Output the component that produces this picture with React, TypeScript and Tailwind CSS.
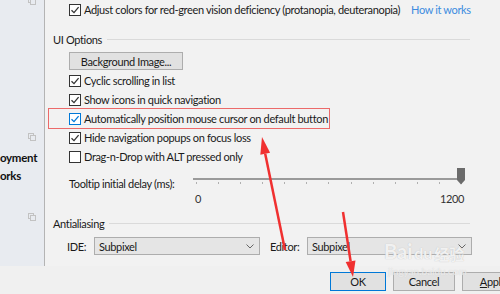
import type { ReactElement, ReactNode } from "react";

interface CheckRowProps {
  checked: boolean;
  focused?: boolean;
  children: ReactNode;
}

const CheckBox = ({ checked, focused }: { checked: boolean; focused?: boolean }): ReactElement => (
  <span
    className={`w-[12px] h-[12px] border bg-white flex items-center justify-center shrink-0 ${
      focused ? "border-[#0078d7]" : "border-[#333333]"
    }`}
  >
    {checked && (
      <svg width="10" height="10" viewBox="0 0 10 10" fill="none">
        <path
          d="M1.5 5.2 L4 7.6 L8.6 2.2"
          stroke={focused ? "#0078d7" : "#333333"}
          strokeWidth="1.3"
        />
      </svg>
    )}
  </span>
);

const CheckRow = ({ checked, focused, children }: CheckRowProps): ReactElement => (
  <div className="h-[19px] flex items-center gap-[3px] pl-[24px]">
    <CheckBox checked={checked} focused={focused} />
    <span className="whitespace-nowrap">{children}</span>
  </div>
);

const SectionHeader = ({ label }: { label: string }): ReactElement => (
  <div className="h-[20px] flex items-center gap-[5px] pl-[8px] pr-[30px]">
    <span className="whitespace-nowrap">{label}</span>
    <span className="flex-1 h-px bg-[#dadada]" />
  </div>
);

const Dropdown = ({ value, width }: { value: string; width: string }): ReactElement => (
  <div
    className={`${width} h-[18px] border border-[#adadad] bg-[#e5e5e5] flex items-center justify-between pl-[4px] pr-[5px]`}
  >
    <span className="whitespace-nowrap">{value}</span>
    <svg width="8" height="5" viewBox="0 0 8 5" fill="none">
      <path d="M0.5 0.5 L4 4 L7.5 0.5" stroke="#666" strokeWidth="1" />
    </svg>
  </div>
);

const PanelIcon = (): ReactElement => (
  <svg width="8" height="8" viewBox="0 0 8 8" fill="none">
    <rect x="0.5" y="0.5" width="5" height="5" stroke="#c2c2c2" />
    <rect x="2.5" y="2.5" width="5" height="5" fill="#e8ebf0" stroke="#c2c2c2" />
  </svg>
);

const ticks: number[] = Array.from({ length: 13 }, (_, i) => i);

const App = (): ReactElement => (
  <div className="w-[500px] h-[294px] overflow-hidden relative bg-[#f0f0f0] text-[11px] tracking-[-0.35px] text-[#1a1a1a] font-['Lato',sans-serif] leading-none">
    <div className="h-[266px] flex">
      <div className="w-[45px] shrink-0 bg-[#e8ebf0] border-r border-[#b4b4b4] flex flex-col">
        <div className="pl-[28px] -mt-[3px]">
          <PanelIcon />
        </div>
        <div className="pl-[28px] mt-[128px]">
          <PanelIcon />
        </div>
        <div className="mt-[8px] h-[18px] flex items-center font-bold text-[11.5px] tracking-[-0.3px] text-[#111] whitespace-nowrap">
          oyment
        </div>
        <div className="h-[18px] flex items-center font-bold text-[11.5px] tracking-[-0.3px] text-[#111] whitespace-nowrap">
          orks
        </div>
        <div className="pl-[28px] mt-[28px]">
          <PanelIcon />
        </div>
      </div>

      <div className="flex-1 bg-[#f2f2f2] flex flex-col">
        <div className="h-[19px] flex items-center gap-[3px] pl-[24px]">
          <CheckBox checked />
          <span className="whitespace-nowrap">
            Adjust colors for red-green vision deficiency (protanopia, deuteranopia)
          </span>
          <span className="ml-[8px] whitespace-nowrap text-[#3c8ce0]">How it works</span>
        </div>

        <div className="mt-[10px]">
          <SectionHeader label="UI Options" />
        </div>

        <div className="mt-[3px] pl-[24px]">
          <div className="w-[114px] h-[18px] border border-[#adadad] bg-[#e1e1e1] flex items-center justify-center whitespace-nowrap">
            Background Image...
          </div>
        </div>

        <div className="mt-[1px]">
          <CheckRow checked>Cyclic scrolling in list</CheckRow>
          <CheckRow checked>Show icons in quick navigation</CheckRow>
          <div className="-my-px ml-[3px] w-[282px] h-[21px] border border-[#ec6a6a] flex items-center gap-[3px] pl-[20px]">
            <CheckBox checked focused />
            <span className="whitespace-nowrap">
              Automatically position mouse cursor on default button
            </span>
          </div>
          <CheckRow checked>Hide navigation popups on focus loss</CheckRow>
          <CheckRow checked={false}>Drag-n-Drop with ALT pressed only</CheckRow>
        </div>

        <div className="h-[38px] flex">
          <div className="w-[148px] pl-[24px] pt-[12px] whitespace-nowrap">
            Tooltip initial delay (ms):
          </div>
          <div className="w-[272px] relative flex flex-col">
            <div className="mt-[12px] h-[2px] bg-[#9a9a9a]" />
            <div className="mt-[2px] h-[3px] flex justify-between pl-[3px] pr-[3px]">
              {ticks.map((t) => (
                <span key={t} className="w-px h-full bg-[#b0b0b0]" />
              ))}
            </div>
            <div className="mt-[9px] flex justify-between pl-[2px] pr-[1px] text-[#333]">
              <span>0</span>
              <span>1200</span>
            </div>
            <svg
              className="absolute top-[2px] left-[264px]"
              width="9"
              height="17"
              viewBox="0 0 9 17"
            >
              <path d="M0 0 H8 V12 L4 16.5 L0 12 Z" fill="#6b6b6b" />
            </svg>
          </div>
        </div>

        <div className="mt-[9px]">
          <SectionHeader label="Antialiasing" />
        </div>

        <div className="mt-[4px] flex items-center pl-[22px]">
          <span className="w-[27px]">IDE:</span>
          <Dropdown value="Subpixel" width="w-[166px]" />
          <span className="ml-[10px] w-[37px]">Editor:</span>
          <Dropdown value="Subpixel" width="w-[165px]" />
        </div>
      </div>
    </div>

    <div className="h-[28px] flex items-start pt-[6px] pl-[330px] gap-[7px]">
      <div className="w-[56px] h-[19px] shrink-0 border border-[#0078d7] bg-[#e1e1e1] flex items-center justify-center">
        OK
      </div>
      <div className="w-[62px] h-[19px] shrink-0 border border-[#adadad] bg-[#e1e1e1] flex items-center justify-center">
        Cancel
      </div>
      <div className="w-[62px] h-[19px] shrink-0 border border-[#adadad] bg-[#e1e1e1] flex items-center justify-center">
        <span>
          <span className="underline">A</span>pply
        </span>
      </div>
    </div>

    <div className="absolute left-[384px] top-[241px] flex items-end gap-[2px] text-white/80 font-bold text-[20px] tracking-normal [text-shadow:0_0_1px_#b5b5b5] pointer-events-none">
      <span>Bai</span>
      <span className="text-[16px]">du</span>
      <span className="text-[15px] font-['Noto_Sans_CJK_SC',sans-serif]">经验</span>
    </div>
    <div className="absolute left-[388px] top-[266px] text-[10px] tracking-normal text-white/60 [text-shadow:0_0_1px_#c8c8c8] pointer-events-none">
      jingyan.baidu.com
    </div>

    <svg className="absolute inset-0 pointer-events-none" width="500" height="294" viewBox="0 0 500 294">
      <line x1="285" y1="250" x2="265.2" y2="153.7" stroke="#f03030" strokeWidth="2.5" />
      <polygon points="262,137 270.1,152.7 260.3,154.7" fill="#f03030" />
      <line x1="343" y1="212" x2="350.6" y2="261.2" stroke="#f03030" strokeWidth="2.5" />
      <polygon points="353,277 355.5,260.4 345.7,262" fill="#f03030" />
    </svg>
  </div>
);

export default App;
